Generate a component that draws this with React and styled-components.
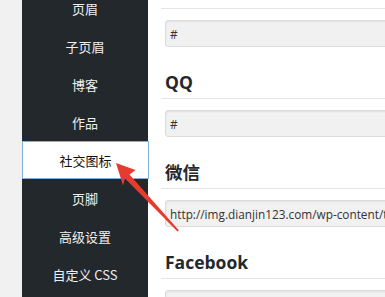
import React from 'react'
import styled, { createGlobalStyle } from 'styled-components'

const GlobalStyle = createGlobalStyle`
  html, body {
    margin: 0;
    padding: 0;
    background: #fff;
  }
  body {
    font-family: "Open Sans", "Noto Sans CJK SC", sans-serif;
  }
`

const menu = ['页眉', '子页眉', '博客', '作品', '社交图标', '页脚', '高级设置', '自定义 CSS']

const sections = [
  { title: null, value: '#' },
  { title: 'QQ', value: '#' },
  { title: '微信', value: 'http://img.dianjin123.com/wp-content/themes/uploads/weixin.png' },
  { title: 'Facebook', value: '' },
]

const App = () => {
  return (
    <Page>
      <GlobalStyle />
      <Gutter />
      <Sidebar>
        <MenuList>
          {menu.map(label => (
            <MenuItem key={label} active={label === '社交图标'}>{label}</MenuItem>
          ))}
        </MenuList>
      </Sidebar>
      <Content>
        {sections.map((s, i) => (
          <Section key={i}>
            {s.title ? <Heading>{s.title}</Heading> : <Divider />}
            <Field readOnly value={s.value} />
          </Section>
        ))}
      </Content>
      <Arrow width="385" height="297" viewBox="0 0 385 297">
        <polygon
          fill="#e63b2e"
          points="116,163 135.5,170 129.5,174.5 179,230.5 177.5,231.5 125,178.5 123,185.5"
        />
      </Arrow>
    </Page>
  )
}

const Page = styled.div`
  position: relative;
  display: flex;
  width: 385px;
  height: 297px;
  overflow: hidden;
`
const Gutter = styled.div`
  width: 22px;
  flex-shrink: 0;
  background: #f1f1f1;
`
const Sidebar = styled.nav`
  width: 126px;
  flex-shrink: 0;
  background: #23282d;
  position: relative;
  z-index: 1;
`
const MenuList = styled.ul`
  list-style: none;
  margin: -11px 0 0;
  padding: 0;
`
const MenuItem = styled.li`
  height: 38px;
  box-sizing: border-box;
  display: flex;
  align-items: center;
  justify-content: center;
  font-family: "Noto Sans CJK SC", "Open Sans", sans-serif;
  font-size: 13px;
  color: ${props => props.active ? '#111' : '#f0f0f0'};
  background: ${props => props.active ? '#fff' : 'transparent'};
  border: 1px solid ${props => props.active ? '#7fb2e0' : 'transparent'};
  margin-right: ${props => props.active ? '-1px' : '0'};
`
const Content = styled.main`
  flex: 1;
  min-width: 0;
  overflow: hidden;
  padding: 8px 0 0 13px;
`
const Section = styled.section`
  & + & {
    margin-top: 23px;
  }
`
const Divider = styled.div`
  border-top: 1px solid #e5e5e5;
`
const Heading = styled.h3`
  margin: 0;
  padding: 0 0 4px 4px;
  font-family: "Open Sans", "Noto Sans CJK SC", sans-serif;
  font-size: 17.5px;
  line-height: 24px;
  font-weight: 700;
  color: #23282d;
  border-bottom: 1px solid #e5e5e5;
`
const Field = styled.input`
  display: block;
  box-sizing: border-box;
  margin: 11px 0 0 4px;
  width: 280px;
  height: 27px;
  padding: 0 4px;
  font-family: "Open Sans", sans-serif;
  font-size: 11.8px;
  color: #333;
  background: #f1f1f1;
  border: 1px solid #dcdcdc;
  border-radius: 3px;
  box-shadow: inset 0 1px 2px rgba(0, 0, 0, 0.07);
  outline: none;
`
const Arrow = styled.svg`
  position: absolute;
  left: 0;
  top: 0;
  z-index: 2;
  pointer-events: none;
`

export default App
